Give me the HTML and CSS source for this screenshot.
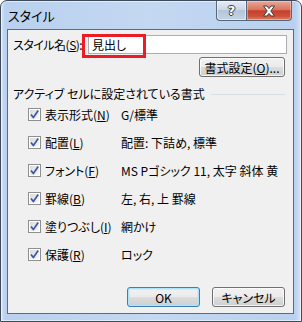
FILE: index.html
```html
<!DOCTYPE html>
<html>
<head>
  <title>スタイル</title>
  <link rel="stylesheet" href="styles.css">
</head>
<body>
  <svg width="0" height="0" class="defs">
    <defs>
      <linearGradient id="boxfill" x1="0" y1="0" x2="1" y2="1">
        <stop offset="0" stop-color="#d9dbde"/>
        <stop offset="1" stop-color="#f8f8f9"/>
      </linearGradient>
      <symbol id="checked" viewBox="0 0 13 13">
        <rect x="0.5" y="0.5" width="12" height="12" fill="#fff" stroke="#8e8f8f"/>
        <rect x="2" y="2" width="9" height="9" fill="url(#boxfill)"/>
        <path d="M3 6.4 L5.4 9.6 L10.2 2.6" fill="none" stroke="#3d58a8" stroke-width="1.7" stroke-linejoin="round"/>
      </symbol>
    </defs>
  </svg>

  <div class="window">
    <div class="titlebar">
      <span class="title">スタイル</span>
      <div class="caption-btns">
        <span class="cap help">?</span>
        <span class="cap close">
          <svg width="14" height="12" viewBox="0 0 14 12">
            <path d="M1.5 1 H5 L7 3.6 L9 1 H12.5 L8.8 6 L12.5 11 H9 L7 8.4 L5 11 H1.5 L5.2 6 Z" fill="#fff" stroke="#3d3d3d" stroke-width="1" stroke-linejoin="round"/>
          </svg>
        </span>
      </div>
    </div>

    <div class="client">
      <div class="name-row">
        <label class="name-label">スタイル名(<u>S</u>):</label>
        <div class="textbox">見出し</div>
        <div class="highlight"></div>
      </div>

      <div class="format-row">
        <button class="btn format-btn">書式設定(<u>O</u>)...</button>
      </div>

      <div class="group-head">
        <span>アクティブ セルに設定されている書式</span>
        <span class="rule"></span>
      </div>

      <ul class="items">
        <li>
          <svg class="check" width="13" height="13"><use href="#checked"/></svg>
          <span class="item-label">表示形式(<u>N</u>)</span>
          <span class="item-value">G/標準</span>
        </li>
        <li>
          <svg class="check" width="13" height="13"><use href="#checked"/></svg>
          <span class="item-label">配置(<u>L</u>)</span>
          <span class="item-value">配置: 下詰め, 標準</span>
        </li>
        <li>
          <svg class="check" width="13" height="13"><use href="#checked"/></svg>
          <span class="item-label">フォント(<u>F</u>)</span>
          <span class="item-value">MS Pゴシック 11, 太字 斜体 黄</span>
        </li>
        <li>
          <svg class="check" width="13" height="13"><use href="#checked"/></svg>
          <span class="item-label">罫線(<u>B</u>)</span>
          <span class="item-value">左, 右, 上 罫線</span>
        </li>
        <li>
          <svg class="check" width="13" height="13"><use href="#checked"/></svg>
          <span class="item-label">塗りつぶし(<u>I</u>)</span>
          <span class="item-value">網かけ</span>
        </li>
        <li>
          <svg class="check" width="13" height="13"><use href="#checked"/></svg>
          <span class="item-label">保護(<u>R</u>)</span>
          <span class="item-value">ロック</span>
        </li>
      </ul>

      <div class="actions">
        <button class="btn default">OK</button>
        <button class="btn">キャンセル</button>
      </div>
    </div>
  </div>
</body>
</html>
```

FILE: styles.css
```css
* {
  box-sizing: border-box;
}
body {
  margin: 0;
  overflow: hidden;
  background: #fff;
  font-family: "Noto Sans CJK JP", "Noto Sans", sans-serif;
  font-size: 12px;
  font-feature-settings: "palt";
  color: #000;
}
.defs {
  position: absolute;
}
u {
  text-decoration: underline;
  text-underline-offset: 1px;
}

/* window frame */
.window {
  width: 302px;
  height: 322px;
  display: flex;
  flex-direction: column;
  padding: 0 7px 7px 6px;
  border: 1px solid #3e4a5a;
  border-radius: 7px 7px 0 0;
  background: linear-gradient(90deg, #d6e5f6 0, #b9d1ee 4px, #c3d8f1 50%, #b9d1ee 98%, #d6e5f6 100%);
  box-shadow: inset 0 0 0 1px rgba(255, 255, 255, 0.55);
}
.titlebar {
  height: 28px;
  display: flex;
  align-items: flex-start;
}
.title {
  margin: 6px 0 0 1px;
  font-size: 13px;
  line-height: 18px;
}
.caption-btns {
  margin-left: auto;
  margin-right: 2px;
  display: flex;
}
.cap {
  height: 20px;
  display: flex;
  justify-content: center;
  align-items: center;
  border: 1px solid #58667a;
  border-top: none;
}
.help {
  width: 30px;
  border-right: none;
  border-radius: 0 0 0 4px;
  background: linear-gradient(#e4ebf3, #cbd8e6 45%, #b5c6da 50%, #c5d4e4);
  box-shadow: inset 0 0 0 1px rgba(255, 255, 255, 0.5);
  color: #fff;
  font-family: "DejaVu Sans", sans-serif;
  font-weight: bold;
  font-size: 13px;
  text-shadow: 1px 0 #3d3d3d, -1px 0 #3d3d3d, 0 1px #3d3d3d, 0 -1px #3d3d3d;
}
.close {
  width: 46px;
  border-radius: 0 0 4px 0;
  background: linear-gradient(#eaa898, #d9745f 45%, #c3412b 52%, #cc5138 80%, #e0836a);
  box-shadow: inset 0 0 0 1px rgba(255, 220, 210, 0.45);
}

/* client area */
.client {
  flex: 1;
  display: flex;
  flex-direction: column;
  padding: 5px 6px 0 5px;
  border: 1px solid #5c6b7e;
  background: #f0f0f0;
}
.name-row {
  position: relative;
  display: flex;
  align-items: center;
}
.name-label {
  width: 75px;
  white-space: nowrap;
  letter-spacing: -0.5px;
}
.textbox {
  flex: 1;
  height: 19px;
  padding-left: 3px;
  border: 1px solid #abadb3;
  background: #fff;
  line-height: 17px;
}
.highlight {
  position: absolute;
  left: 69px;
  top: -1px;
  width: 64px;
  height: 24px;
  border: 3px solid #ec1c24;
}
.format-row {
  display: flex;
  justify-content: flex-end;
  margin-top: 3px;
  padding-right: 2px;
}
.btn {
  height: 20px;
  width: 73px;
  padding: 0;
  border: 1px solid #707070;
  border-radius: 3px;
  background: linear-gradient(#f2f2f2, #ebebeb 50%, #dddddd 50%, #cfcfcf);
  box-shadow: inset 0 0 0 1px rgba(255, 255, 255, 0.75);
  font: inherit;
  color: #000;
}
.format-btn {
  width: 86px;
}
.btn.default {
  border-color: #3c7fb1;
  box-shadow: inset 0 0 0 1px #aee3f8, inset 0 0 0 2px rgba(174, 227, 248, 0.45);
}
.group-head {
  margin-top: 11px;
  display: flex;
  align-items: center;
  gap: 6px;
  line-height: 12px;
}
.rule {
  flex: 1;
  border-top: 1px solid #d5dfe5;
  margin-right: 1px;
}

/* items */
.items {
  list-style: none;
  margin: 0;
  padding: 0 0 0 15px;
}
.items li {
  height: 28px;
  display: flex;
  align-items: center;
}
.check {
  flex: none;
  margin-right: 4px;
}
.item-label {
  width: 76px;
}

.actions {
  margin-top: 19px;
  display: flex;
  justify-content: flex-end;
  gap: 12px;
  padding-right: 2px;
}
```
